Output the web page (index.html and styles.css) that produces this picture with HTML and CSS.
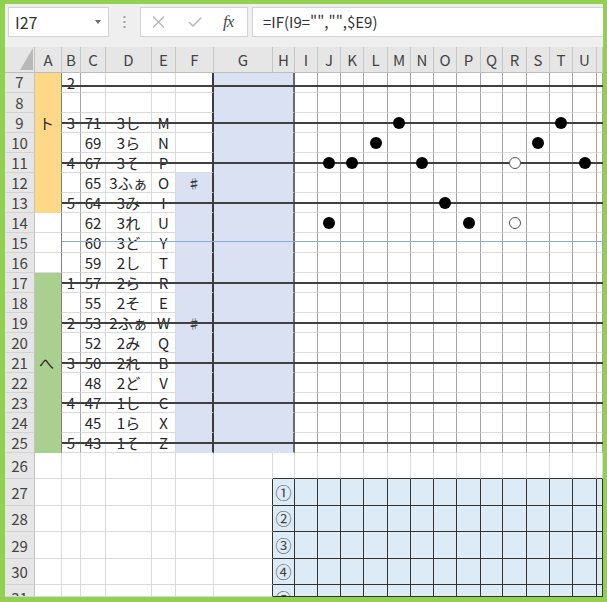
FILE: index.html
```html
<!DOCTYPE html>
<html lang="ja">
<head>
    <meta charset="UTF-8">
    <title>楽譜シート</title>
    <link rel="stylesheet" href="styles.css">
</head>
<body>
    <div class="frame">
        <div class="formula-bar">
            <div class="name-box">
                <span>I27</span>
                <span class="caret"></span>
            </div>
            <div class="grip">
                <svg width="3" height="12" viewBox="0 0 3 12">
                    <rect x="0.5" y="0" width="2" height="2" fill="#a0a0a0"/>
                    <rect x="0.5" y="5" width="2" height="2" fill="#a0a0a0"/>
                    <rect x="0.5" y="10" width="2" height="2" fill="#a0a0a0"/>
                </svg>
            </div>
            <div class="fx-buttons">
                <svg class="cancel" width="13" height="12" viewBox="0 0 13 12">
                    <path d="M1 0.5 L12 11.5 M12 0.5 L1 11.5" stroke="#b4b4b4" stroke-width="1.3" fill="none"/>
                </svg>
                <svg class="enter" width="14" height="10" viewBox="0 0 14 10">
                    <path d="M0.8 5 L5 9 L13.2 0.8" stroke="#b4b4b4" stroke-width="1.4" fill="none"/>
                </svg>
                <span class="fx">fx</span>
            </div>
            <div class="formula-input">=IF(I9="","",$E9)</div>
        </div>
        <div class="sheet" id="sheet"></div>
    </div>

    <script>
        const cols = ['A', 'B', 'C', 'D', 'E', 'F', 'G', 'H', 'I', 'J', 'K', 'L',
                      'M', 'N', 'O', 'P', 'Q', 'R', 'S', 'T', 'U', 'V'];
        const staffCols = 'IJKLMNOPQRSTUV';
        const tableCols = 'HIJKLMNOPQRSTUV';

        const values = {
            A9: 'ト', A21: 'へ',
            B7: '2', B9: '3', B11: '4', B13: '5',
            B17: '1', B19: '2', B21: '3', B23: '4', B25: '5',
            F12: '♯', F19: '♯',
            H27: '①', H28: '②', H29: '③', H30: '④', H31: '⑤'
        };

        // 音程, 音名, キー
        const scale = [
            [9, '71', '3し', 'M'], [10, '69', '3ら', 'N'], [11, '67', '3そ', 'P'],
            [12, '65', '3ふぁ', 'O'], [13, '64', '3み', 'I'], [14, '62', '3れ', 'U'],
            [15, '60', '3ど', 'Y'], [16, '59', '2し', 'T'], [17, '57', '2ら', 'R'],
            [18, '55', '2そ', 'E'], [19, '53', '2ふぁ', 'W'], [20, '52', '2み', 'Q'],
            [21, '50', '2れ', 'B'], [22, '48', '2ど', 'V'], [23, '47', '1し', 'C'],
            [24, '45', '1ら', 'X'], [25, '43', '1そ', 'Z']
        ];
        scale.forEach(([row, num, name, key]) => {
            values['C' + row] = num;
            values['D' + row] = name;
            values['E' + row] = key;
        });

        const notes = {
            M9: 'on', T9: 'on', L10: 'on', S10: 'on',
            J11: 'on', K11: 'on', N11: 'on', R11: 'off', U11: 'on',
            O13: 'on', J14: 'on', P14: 'on', R14: 'off'
        };

        const sheet = document.getElementById('sheet');

        function addCell(classes, text) {
            const cell = document.createElement('div');
            cell.className = 'cell ' + classes.join(' ');
            if (text) cell.textContent = text;
            sheet.appendChild(cell);
            return cell;
        }

        function classesFor(col, row) {
            const list = [];
            if (row <= 25) {
                if (col === 'A') {
                    list.push('col-a');
                    if (row <= 13) list.push('yellow');
                    if (row >= 17) list.push('green');
                } else if (col === 'B') {
                    list.push('col-b');
                } else if (col === 'F') {
                    if (row >= 12) list.push('blue');
                    list.push('col-f');
                } else if (col === 'G') {
                    list.push('blue');
                } else if (col === 'H') {
                    list.push('blue', 'col-h');
                } else if (staffCols.includes(col)) {
                    list.push('staff-col');
                }
            } else {
                if (row === 26 && tableCols.includes(col)) list.push('tbl-top');
                if (row >= 27 && col === 'G') list.push('tbl-left');
                if (row >= 27 && tableCols.includes(col)) list.push('tbl');
                if (col === 'H') list.push('circled');
            }
            if (col === 'F') list.push('sharp');
            if (row === 31) list.push('cut');
            return list;
        }

        // 見出し行
        const corner = addCell(['corner']);
        corner.innerHTML = '<svg width="13" height="22" viewBox="0 0 13 22"><polygon points="0,22 13,22 13,0" fill="#b9b9b9"/></svg>';
        cols.forEach(col => addCell(['col-head'], col === 'V' ? '' : col));

        for (let row = 7; row <= 31; row++) {
            const headClasses = ['row-head'];
            if (row === 7) headClasses.push('first');
            if (row === 31) headClasses.push('cut');
            addCell(headClasses, String(row));

            cols.forEach(col => {
                const cell = addCell(classesFor(col, row), values[col + row]);
                const note = notes[col + row];
                if (note) {
                    const dot = document.createElement('span');
                    dot.className = note === 'on' ? 'note' : 'note hollow';
                    cell.appendChild(dot);
                }
            });
        }

        // 五線 (行の中央を通る線)
        [7, 9, 11, 13, 15, 17, 19, 21, 23, 25].forEach(row => {
            const line = document.createElement('div');
            const rowTop = 26 + (row - 7) * 20;
            line.className = row === 15 ? 'staff middle' : 'staff';
            line.style.top = (rowTop + (row === 7 ? 12 : row === 15 ? 8 : 9)) + 'px';
            sheet.appendChild(line);
        });
    </script>
</body>
</html>
```

FILE: styles.css
```css
* {
    margin: 0;
    padding: 0;
    box-sizing: border-box;
}

body {
    width: 607px;
    height: 602px;
    overflow: hidden;
    background: #fff;
    color: #262626;
    font-family: "Noto Sans CJK JP", "Noto Sans", sans-serif;
}

.frame {
    width: 607px;
    height: 602px;
    border: solid #92d050;
    border-width: 4px 4px 5px 5px;
    display: flex;
    flex-direction: column;
    overflow: hidden;
}

/* 数式バー */
.formula-bar {
    flex: none;
    height: 43px;
    padding: 3px 0 0 3px;
    display: flex;
    align-items: flex-start;
    background: #efefef;
}

.name-box {
    width: 101px;
    height: 30px;
    padding: 0 7px 0 6px;
    display: flex;
    align-items: center;
    justify-content: space-between;
    background: #fff;
    border: 1px solid #d4d4d4;
    color: #333;
    font-size: 16px;
}

.caret {
    border-left: 3px solid transparent;
    border-right: 3px solid transparent;
    border-top: 4px solid #6a6a6a;
}

.grip {
    width: 31px;
    height: 30px;
    display: flex;
    align-items: center;
    justify-content: center;
}

.fx-buttons {
    width: 108px;
    height: 30px;
    margin-right: 4px;
    padding-left: 11px;
    display: flex;
    align-items: center;
    background: #fff;
    border: 1px solid #d4d4d4;
}

.fx-buttons .enter {
    margin-left: 23px;
}

.fx-buttons .fx {
    margin-left: 21px;
    font-family: "Liberation Serif", serif;
    font-style: italic;
    font-size: 17px;
    color: #4a4a4a;
    letter-spacing: -1px;
}

.formula-input {
    flex: 1;
    height: 30px;
    padding-left: 10px;
    background: #fff;
    border: 1px solid #d4d4d4;
    border-right: none;
    color: #333;
    font-size: 15px;
    line-height: 28px;
    white-space: nowrap;
}

/* シート */
.sheet {
    position: relative;
    flex: 1;
    display: grid;
    grid-template-columns: 30px 27px 19px 25px 46px 24px 38px 59px 22px
                           23px 23px 23px 24px 23px 23px 23px 24px 22px 24px 23px 23px 24px 6px;
    grid-template-rows: 26px repeat(19, 20px) 26px 27px 26px 27px 26px 12px;
    overflow: hidden;
}

.cell {
    display: flex;
    align-items: center;
    justify-content: center;
    border-right: 1px solid #dadada;
    border-bottom: 1px solid #dadada;
    font-size: 15px;
    line-height: 19px;
    white-space: nowrap;
    overflow: hidden;
}

.corner {
    align-items: flex-end;
    justify-content: flex-end;
    padding: 0 1px 2px 0;
    background: #e6e6e6;
    border-right-color: #c2c2c2;
    border-bottom-color: #bdbdbd;
}

.col-head {
    background: #e6e6e6;
    border-right-color: #c6c6c6;
    border-bottom-color: #bdbdbd;
    color: #444;
    font-size: 15px;
}

.row-head {
    background: #e6e6e6;
    border-right-color: #c2c2c2;
    border-bottom-color: #d2d2d2;
    color: #444;
    font-size: 15px;
}

.row-head.first {
    align-items: flex-start;
    line-height: 17px;
}

.cut {
    align-items: flex-start;
    line-height: 26px;
}

.col-a {
    justify-content: flex-start;
    padding-left: 4px;
    border-right-color: #7f7f7f;
}

.col-b {
    border-right-color: #a6a6a6;
}

.yellow {
    background: #fdd987;
    border-bottom-color: #fdd987;
}

.green {
    background: #a9d08e;
    border-bottom-color: #a9d08e;
}

.blue {
    background: #d9e1f2;
    border-right-color: #d9e1f2;
    border-bottom-color: #d9e1f2;
}

.col-f {
    border-right: 2px solid #3a3a3a;
}

.col-h {
    border-right: 2px solid #6a6a6a;
}

.sharp {
    font-size: 13px;
    font-weight: bold;
    color: #333;
}

.staff-col {
    border-right-color: #a3a3a3;
    border-bottom-color: #dddddd;
}

.tbl-top {
    border-bottom-color: #333;
}

.tbl-left {
    border-right-color: #333;
}

.tbl {
    background: #ddebf7;
    border-right-color: #333;
    border-bottom-color: #333;
}

.circled {
    font-size: 16px;
    color: #444;
}

.note {
    position: relative;
    z-index: 2;
    width: 12px;
    height: 12px;
    border-radius: 50%;
    background: #000;
}

.note.hollow {
    background: #fff;
    border: 1px solid #555;
}

.staff {
    position: absolute;
    left: 57px;
    right: 0;
    height: 2px;
    background: #404040;
}

.staff.middle {
    height: 1px;
    background: #8eaadb;
}
```
